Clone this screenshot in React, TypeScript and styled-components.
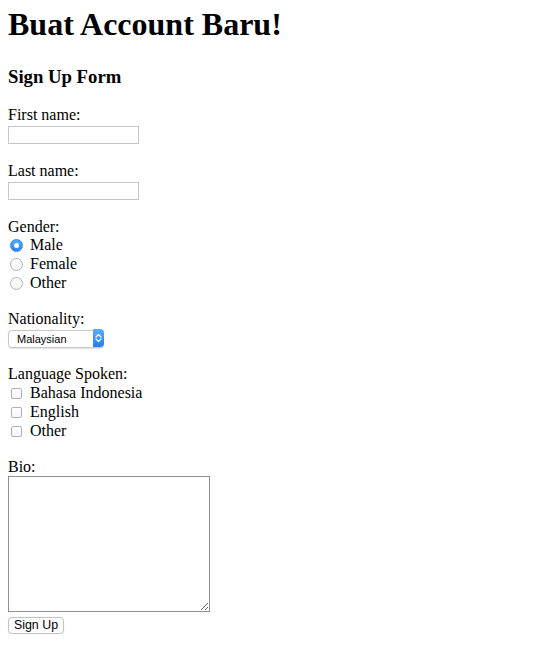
import React from "react";
import styled, { createGlobalStyle } from "styled-components";

const GlobalStyle = createGlobalStyle`
  html, body { margin: 0; padding: 0; background: #ffffff; }
  body {
    font-family: "Liberation Serif", "Times New Roman", serif;
    color: #000000;
  }
`;

const Page = styled.main`
  padding: 0 8px;
`;

const Title = styled.h1`
  margin: 6px 0 0;
  font-size: 32px;
  line-height: 37px;
  font-weight: 700;
`;

const Subtitle = styled.h3`
  margin: 23px 0 0;
  font-size: 18.72px;
  line-height: 22px;
  font-weight: 700;
`;

const Form = styled.form`
  display: flex;
  flex-direction: column;
  align-items: flex-start;
  margin-top: 18px;
`;

const Field = styled.div<{ $after?: number }>`
  display: flex;
  flex-direction: column;
  align-items: flex-start;
  margin-bottom: ${(p) => (p.$after ?? 18)}px;
`;

const Label = styled.label`
  display: block;
  font-size: 16px;
  line-height: 18px;
  height: 18px;
`;

const TextInput = styled.input`
  box-sizing: border-box;
  margin: 2px 0 0;
  width: 131px;
  height: 18px;
  padding: 0 2px;
  border: 1px solid #c6c6c6;
  border-radius: 0;
  background: #fff;
  font: 13px "Liberation Sans", Arial, sans-serif;
  outline: none;
`;

const OptionList = styled.div<{ $shift?: number }>`
  display: flex;
  flex-direction: column;
  margin-top: ${(p) => p.$shift ?? 0}px;
`;

const OptionRow = styled.label`
  display: flex;
  align-items: center;
  height: 19px;
  font-size: 16px;
  line-height: 19px;
`;

const Radio = styled.input.attrs({ type: "radio" })`
  appearance: none;
  box-sizing: border-box;
  width: 13px;
  height: 13px;
  margin: 1px 7px 0 2px;
  border: 1px solid #b4b4b4;
  border-radius: 50%;
  background: linear-gradient(#ffffff, #f4f4f4);
  position: relative;
  flex: none;

  &:checked {
    border-color: #2f86f3;
    background: linear-gradient(#5aa8fb, #2a85f6);
  }
  &:checked::after {
    content: "";
    position: absolute;
    left: 50%;
    top: 50%;
    width: 5px;
    height: 5px;
    margin: -2.5px 0 0 -2.5px;
    border-radius: 50%;
    background: #ffffff;
  }
`;

const Checkbox = styled.input.attrs({ type: "checkbox" })`
  appearance: none;
  box-sizing: border-box;
  width: 11px;
  height: 11px;
  margin: 1px 8px 0 3px;
  border: 1px solid #b0b0b0;
  border-radius: 2px;
  background: linear-gradient(#ffffff, #f6f6f6);
  flex: none;
`;

const SelectWrap = styled.div`
  position: relative;
  margin-top: 1px;
  width: 96px;
  height: 18px;
`;

const Select = styled.select`
  appearance: none;
  box-sizing: border-box;
  width: 100%;
  height: 100%;
  margin: 0;
  padding: 0 14px 0 8px;
  border: 1px solid #c9c9c9;
  border-radius: 4px;
  background: #fff;
  box-shadow: 0 0.5px 1px rgba(0, 0, 0, 0.12);
  font: 11px "Liberation Sans", Arial, sans-serif;
  color: #000;
  outline: none;
`;

const SelectArrow = styled.span`
  position: absolute;
  top: 0;
  right: 0;
  bottom: 0;
  width: 11px;
  display: flex;
  align-items: center;
  justify-content: center;
  border-radius: 0 4px 4px 0;
  background: linear-gradient(#5eabfb, #1f7ff6);
  pointer-events: none;
`;

const Bio = styled.textarea`
  box-sizing: border-box;
  margin: 0;
  width: 202px;
  height: 136px;
  border: 1px solid #8f8f8f;
  border-radius: 0;
  padding: 2px;
  resize: both;
  font: 13px "Liberation Mono", monospace;
  outline: none;
`;

const SubmitButton = styled.button`
  box-sizing: border-box;
  margin-top: 5px;
  width: 56px;
  height: 17px;
  padding: 0;
  border: 1px solid #c4c4c4;
  border-radius: 4px;
  background: #ffffff;
  box-shadow: 0 0.5px 1px rgba(0, 0, 0, 0.1);
  font: 12.4px/15px "Liberation Sans", Arial, sans-serif;
  color: #000;
`;

function UpDownIcon() {
  return (
    <svg width="7" height="10" viewBox="0 0 7 10" fill="none">
      <path d="M1 4 L3.5 1.5 L6 4" stroke="#fff" strokeWidth="1.2" strokeLinecap="round" strokeLinejoin="round" />
      <path d="M1 6 L3.5 8.5 L6 6" stroke="#fff" strokeWidth="1.2" strokeLinecap="round" strokeLinejoin="round" />
    </svg>
  );
}

export default function App() {
  return (
    <>
      <GlobalStyle />
      <Page>
        <Title>Buat Account Baru!</Title>
        <Subtitle>Sign Up Form</Subtitle>
        <Form onSubmit={(e) => e.preventDefault()}>
          <Field>
            <Label htmlFor="fname">First name:</Label>
            <TextInput id="fname" type="text" />
          </Field>
          <Field>
            <Label htmlFor="lname">Last name:</Label>
            <TextInput id="lname" type="text" />
          </Field>
          <Field>
            <Label>Gender:</Label>
            <OptionList $shift={-1}>
              <OptionRow>
                <Radio name="gender" value="male" defaultChecked />
                Male
              </OptionRow>
              <OptionRow>
                <Radio name="gender" value="female" />
                Female
              </OptionRow>
              <OptionRow>
                <Radio name="gender" value="other" />
                Other
              </OptionRow>
            </OptionList>
          </Field>
          <Field>
            <Label htmlFor="nationality">Nationality:</Label>
            <SelectWrap>
              <Select id="nationality" defaultValue="Malaysian">
                <option>Malaysian</option>
                <option>Indonesian</option>
                <option>Singaporean</option>
              </Select>
              <SelectArrow>
                <UpDownIcon />
              </SelectArrow>
            </SelectWrap>
          </Field>
          <Field>
            <Label>Language Spoken:</Label>
            <OptionList>
              <OptionRow>
                <Checkbox value="id" />
                Bahasa Indonesia
              </OptionRow>
              <OptionRow>
                <Checkbox value="en" />
                English
              </OptionRow>
              <OptionRow>
                <Checkbox value="other" />
                Other
              </OptionRow>
            </OptionList>
          </Field>
          <Field $after={0}>
            <Label htmlFor="bio">Bio:</Label>
            <Bio id="bio" />
            <SubmitButton type="submit">Sign Up</SubmitButton>
          </Field>
        </Form>
      </Page>
    </>
  );
}
